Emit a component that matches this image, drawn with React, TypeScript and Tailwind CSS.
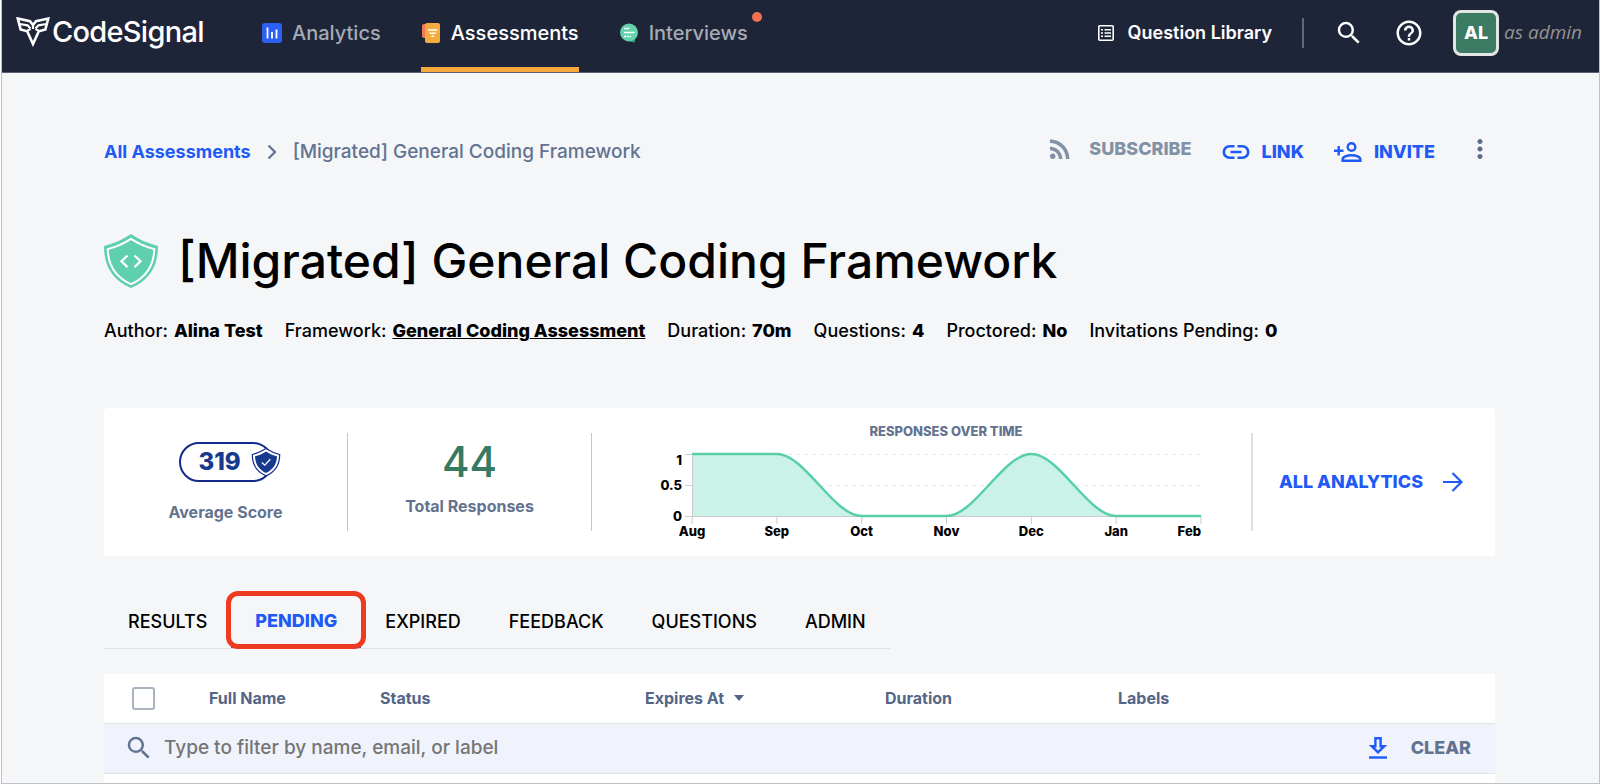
import { useState } from 'react';
import { MdHelpOutline, MdMoreVert, MdRssFeed, MdSearch } from 'react-icons/md';

const months = ['Aug', 'Sep', 'Oct', 'Nov', 'Dec', 'Jan', 'Feb'];
const responses = [1, 1, 0, 0, 1, 0, 0];

const tabs = ['Results', 'Pending', 'Expired', 'Feedback', 'Questions', 'Admin'];

const details = [
  { label: 'Author', value: 'Alina Test' },
  { label: 'Framework', value: 'General Coding Assessment', href: '#framework' },
  { label: 'Duration', value: '70m' },
  { label: 'Questions', value: '4' },
  { label: 'Proctored', value: 'No' },
  { label: 'Invitations Pending', value: '0' },
];

function LogoMark() {
  return (
    <svg viewBox="0 0 34 30" className="h-[30px] w-[34px] shrink-0" fill="none" stroke="#fff" strokeWidth="2.6">
      <path d="M1.800 1.600 L14 4.200 L17 8 L20 4.200 L32.200 1.600 L29.400 12.400 L22.800 14.300 L17 27 L11.200 14.300 L4.600 12.400 Z" />
      <path
        d="M3.500 7 L11.500 8.300 L14.500 11.500 M30.500 7 L22.500 8.300 L19.500 11.500 M17 8v4M11.400 13.500l3.200-1.500M22.600 13.500l-3.200-1.500"
        strokeWidth="2.200"
      />
    </svg>
  );
}

function AnalyticsIcon() {
  return (
    <svg viewBox="0 0 20 20" className="size-5">
      <rect width="20" height="20" rx="3" fill="#2d5ff5" />
      <path d="M5.500 4.500v11M10 9v6.500M14.500 6.500v9" stroke="#fff" strokeWidth="1.800" />
    </svg>
  );
}

function AssessmentsIcon() {
  return (
    <svg viewBox="0 0 20 20" className="size-5">
      <rect x="1" y="1" width="12" height="14" rx="2" fill="#f27a55" />
      <rect x="4" y="0" width="15" height="20" rx="2" fill="#f5ab3d" />
      <path d="M7 7h9.500M8.500 10.200h6.500M10.500 13.200h2.500" stroke="#fff" strokeWidth="1.600" />
    </svg>
  );
}

function InterviewsIcon() {
  return (
    <svg viewBox="0 0 20 20" className="size-5">
      <path d="M10 12h6v7.500l-5-1z" fill="#2e9e86" />
      <circle cx="10" cy="9.500" r="9" fill="#65d2ae" />
      <path d="M5 5.500h5.500M5 9.500h10.500" stroke="#fff" strokeWidth="1.600" />
      <path d="M5 13.500h7" stroke="#fff" strokeWidth="1.600" strokeDasharray="2 0.700" />
    </svg>
  );
}

function LibraryIcon() {
  return (
    <svg viewBox="0 0 16 16" className="size-4" fill="none" stroke="#fff">
      <rect x="0.8" y="0.8" width="14.4" height="14.4" rx="1" strokeWidth="1.6" />
      <path d="M3 4.700h2M3 8h2M3 11.300h2M6.500 4.700h6.500M6.500 8h6.500M6.500 11.300h6.500" strokeWidth="1.500" />
    </svg>
  );
}

function LinkIcon() {
  return (
    <svg viewBox="0 0 28 16" className="h-4 w-7" fill="none" stroke="currentColor" strokeWidth="2.6">
      <path d="M12.500 2.300H7.500a5.700 5.700 0 0 0 0 11.400h5M15.500 2.300h5a5.700 5.700 0 0 1 0 11.400h-5M8.500 8h11" />
    </svg>
  );
}

function InviteIcon() {
  return (
    <svg viewBox="0 0 28 20" className="h-5 w-7" fill="none" stroke="currentColor" strokeWidth="2.400">
      <path d="M0 8.700h9.500M4.700 4v9.500" />
      <circle cx="17.500" cy="5" r="3.800" />
      <path d="M8.600 18.700v-1.500c0-2.400 4.400-4 8.900-4s8.900 1.600 8.900 4v1.500z" />
    </svg>
  );
}

function CodeShield() {
  return (
    <svg viewBox="0 0 54 54" className="size-[54px] shrink-0">
      <path d="M27 0C35 5.500 44 9.500 54 12c0 20-8 34-27 42C8 46 0 32 0 12 10 9.500 19 5.500 27 0z" fill="#5fd0ad" />
      <path
        d="M27 4.800c7.200 4.700 14.800 8.100 23.300 10.300-.5 16.200-7.500 28-23.300 35.100C11.200 43.100 4.200 31.300 3.700 15.100 12.200 12.900 19.800 9.500 27 4.800z"
        fill="none"
        stroke="#fff"
        strokeWidth="2"
      />
      <path d="M23.500 21.500l-6 5.800 6 5.800M30.500 21.500l6 5.800-6 5.800" fill="none" stroke="#fff" strokeWidth="2.200" />
    </svg>
  );
}

function ScoreShield() {
  return (
    <svg viewBox="0 0 30 30" className="absolute top-[3px] -right-[10px] size-[30px]">
      <path
        d="M15 1.500c4.500 3 8.500 4.800 13.700 6C28.700 18 24 25 15 28.800 6 25 1.300 18 1.300 7.500 6.500 6.300 10.500 4.500 15 1.500z"
        fill="#fff"
        stroke="#14298c"
        strokeWidth="1.200"
      />
      <path d="M15 4.500c3.500 2.300 7 3.800 11 4.800-.3 8-4 13.500-11 16.700C8 22.800 4.300 17.300 4 9.300c4-1 7.500-2.500 11-4.800z" fill="#173a8f" />
      <path d="M10.800 15.500l3 2.700 5.500-6" fill="none" stroke="#fff" strokeWidth="1.300" />
    </svg>
  );
}

function DownloadIcon() {
  return (
    <svg viewBox="0 0 18 22" className="h-[22px] w-[18px]" fill="none" stroke="currentColor" strokeWidth="2.400">
      <path d="M6.400 1.200h5.200v8h3.600L9 15.300 2.800 9.200h3.600z" />
      <path d="M0 20.500h18" />
    </svg>
  );
}

function ResponsesChart() {
  const left = 44;
  const right = 553;
  const top = 13;
  const bottom = 75;
  const step = (right - left) / (months.length - 1);
  const y = (value: number) => bottom - value * (bottom - top);

  // flat tangents at every point, so each segment eases in and out
  const line = responses
    .map((value, i) => {
      const x = left + i * step;
      if (i === 0) return `M${x} ${y(value)}`;
      const prev = responses[i - 1];
      return `C${x - (step * 2) / 3} ${y(prev)} ${x - step / 3} ${y(value)} ${x} ${y(value)}`;
    })
    .join(' ');

  return (
    <svg viewBox="0 0 560 100" className="h-[100px] w-[560px]" role="img" aria-label="Responses over time">
      <path d={`M${left} ${top + 0.5}H${right}M${left} 44.500H${right}`} stroke="#e8e8e8" strokeDasharray="4 4" />
      <path d={`${line} V${bottom} H${left} Z`} fill="#cbf2e8" />
      <path d={`M${left + 0.5} ${top}V${bottom}M${left} ${bottom + 0.5}H${right}`} stroke="#ccc" />
      <path d={`M37 ${top + 0.5}h7M37 44.500h7M37 ${bottom + 0.5}h7`} stroke="#ccc" />
      {months.map((month, i) => (
        <path key={month} d={`M${left + i * step} ${bottom}v8`} stroke="#ccc" />
      ))}
      <path d={line} fill="none" stroke="#58ceab" strokeWidth="2.5" />
      <g fontSize="13" fontWeight="800" textAnchor="end">
        <text x="34" y="24">1</text>
        <text x="34" y="49">0.5</text>
        <text x="34" y="80">0</text>
      </g>
      <g fontSize="13" fontWeight="800">
        {months.map((month, i) => (
          <text key={month} x={left + i * step} y="95" textAnchor={i === months.length - 1 ? 'end' : 'middle'}>
            {month}
          </text>
        ))}
      </g>
    </svg>
  );
}

function Header() {
  return (
    <header className="flex h-[73px] items-center justify-between border-b border-[#59617a] bg-[#1f2538] pr-[17px] pl-[14px] text-white">
      <div className="flex h-full items-center">
        <a href="#home" className="flex w-[246px] items-center gap-[2px] pb-2">
          <LogoMark />
          <span className="text-[29px] leading-8 font-medium tracking-tight">CodeSignal</span>
        </a>
        <nav className="flex h-full gap-10 pb-[7px] text-xl font-medium text-[#a5abb5]">
          <a href="#analytics" className="flex items-center gap-[10px]">
            <AnalyticsIcon />
            Analytics
          </a>
          <a href="#assessments" className="relative flex items-center gap-[10px] text-white">
            <AssessmentsIcon />
            Assessments
            <span className="absolute inset-x-0 -bottom-[7px] h-[5px] bg-[#f5a93b]" />
          </a>
          <a href="#interviews" className="relative flex items-center gap-[10px]">
            <InterviewsIcon />
            Interviews
            <span className="absolute top-3 -right-[14px] size-[10px] rounded-full bg-[#f2724f]" />
          </a>
        </nav>
      </div>
      <div className="flex items-center pb-[7px]">
        <a href="#library" className="flex items-center gap-[14px] text-lg font-semibold">
          <LibraryIcon />
          Question Library
        </a>
        <span className="ml-[30px] h-[30px] w-[2px] bg-[#5a6a85]" />
        <button aria-label="Search" className="ml-[30px]">
          <MdSearch className="size-[30px]" />
        </button>
        <button aria-label="Help" className="ml-[30px]">
          <MdHelpOutline className="size-[30px]" />
        </button>
        <button className="ml-[29px] size-[46px] rounded-lg border-[3px] border-[#e4e6e6] bg-[#3b7a63] text-lg font-extrabold">AL</button>
        <span className="ml-[5px] font-['Open_Sans'] text-[19px] text-[#939393] italic">as admin</span>
      </div>
    </header>
  );
}

export default function App() {
  const [activeTab, setActiveTab] = useState('Pending');
  const [filter, setFilter] = useState('');

  return (
    <div className="ml-px flex min-h-screen flex-col border-r border-b border-l border-[#bfc1c4] bg-[#f4f6f8] font-['Inter',sans-serif] text-black">
      <Header />
      <main className="flex grow flex-col pr-[104px] pl-[102px]">
        <div className="mt-[62px] flex h-8 items-center justify-between">
          <nav aria-label="Breadcrumb" className="flex items-center pt-[2px] text-lg">
            <a href="#all" className="font-bold text-[#1f5af6]">All Assessments</a>
            <svg viewBox="0 0 10 16" className="mx-4 h-4 w-[10px]" fill="none" stroke="#5f7290" strokeWidth="2.200">
              <path d="M1.500 1.500L8 8l-6.500 6.500" />
            </svg>
            <span className="text-[19px] font-medium text-[#627392]">[Migrated] General Coding Framework</span>
          </nav>
          <div className="flex items-center pt-[2px] text-lg font-extrabold text-[#1f5af6]">
            <button className="flex items-center gap-[14px] pb-[6px] text-[#8391a4]">
              <MdRssFeed className="size-[30px]" />
              SUBSCRIBE
            </button>
            <button className="ml-[30px] flex items-center gap-3">
              <LinkIcon />
              LINK
            </button>
            <button className="ml-[30px] flex items-center gap-3">
              <InviteIcon />
              INVITE
            </button>
            <button aria-label="More actions" className="ml-[30px] pb-[6px] text-[#5a6a80]">
              <MdMoreVert className="size-[30px]" />
            </button>
          </div>
        </div>

        <div className="mt-[66px] flex items-center gap-5">
          <CodeShield />
          <h1 className="text-[48px] leading-[56px] font-medium">[Migrated] General Coding Framework</h1>
        </div>

        <dl className="mt-[30px] flex h-6 items-center gap-[22px] text-lg">
          {details.map((item) => (
            <div key={item.label} className="flex gap-[6px]">
              <dt className="font-medium">{item.label}:</dt>
              <dd className="font-extrabold">
                {item.href ? <a href={item.href} className="underline">{item.value}</a> : item.value}
              </dd>
            </div>
          ))}
        </dl>

        <section className="mt-[65px] flex h-[148px] items-center rounded-sm bg-white">
          <div className="flex h-[98px] w-[244px] shrink-0 flex-col items-center border-r border-[#c4c6ca] pt-[9px]">
            <div className="relative flex h-10 w-[94px] items-center rounded-full border-2 border-[#14298c] pl-[18px] text-2xl font-extrabold text-[#173a8f]">
              319
              <ScoreShield />
            </div>
            <p className="mt-[18px] text-base leading-6 font-bold text-[#63738f]">Average Score</p>
          </div>
          <div className="flex h-[98px] w-[244px] shrink-0 flex-col items-center border-r border-[#c4c6ca] pt-[9px]">
            <p className="text-[42px] leading-10 font-medium text-[#377a62]">44</p>
            <p className="mt-3 text-base leading-6 font-bold text-[#63738f]">Total Responses</p>
          </div>
          <div className="flex h-[148px] grow flex-col items-center justify-center">
            <div className="ml-3 w-[560px]">
              <h2 className="pr-[7px] pl-11 text-center text-[13px] leading-4 font-extrabold text-[#63738f]">RESPONSES OVER TIME</h2>
              <div className="pt-[2px]">
                <ResponsesChart />
              </div>
            </div>
          </div>
          <div className="flex h-[98px] w-[244px] shrink-0 items-center justify-center border-l-2 border-[#dedfe1] pr-[6px]">
            <a href="#all-analytics" className="flex items-center gap-5 text-lg font-extrabold text-[#1f5af6]">
              ALL ANALYTICS
              <svg viewBox="0 0 20 20" className="size-5" fill="none" stroke="currentColor" strokeWidth="2.200">
                <path d="M0 10h18M9.500 1l9 9-9 9" />
              </svg>
            </a>
          </div>
        </section>

        <div role="tablist" className="mt-9 flex h-[57px] self-start border-b border-[#dfe1e4]">
          {tabs.map((tab) => (
            <button
              key={tab}
              role="tab"
              aria-selected={tab === activeTab}
              onClick={() => setActiveTab(tab)}
              className={`relative px-6 pt-1 text-lg uppercase ${
                tab === activeTab ? 'border-b-2 border-[#1f5af6] font-extrabold text-[#1f5af6]' : 'font-medium'
              }`}
            >
              {tab}
              {tab === 'Pending' && (
                <span className="absolute -inset-x-[5px] -top-px -bottom-[3px] rounded-xl border-[5px] border-[#ee3a20]" />
              )}
            </button>
          ))}
        </div>

        <div className="mt-[25px] grow bg-white">
          <table className="w-full table-fixed text-left">
            <thead>
              <tr className="h-[49px] border-b border-[#e2e4e8] text-base text-[#546687]">
                <th className="w-[105px] pl-7">
                  <input
                    type="checkbox"
                    aria-label="Select all"
                    className="block size-[23px] appearance-none rounded-[3px] border-2 border-[#a9b2c0] bg-white"
                  />
                </th>
                <th className="w-[171px]">Full Name</th>
                <th className="w-[265px]">Status</th>
                <th className="w-[240px]">
                  <button className="flex items-center gap-[10px]">
                    Expires At
                    <svg viewBox="0 0 10 6" className="h-[6px] w-[10px]" fill="currentColor">
                      <path d="M0 0h10L5 6z" />
                    </svg>
                  </button>
                </th>
                <th className="w-[233px]">Duration</th>
                <th>Labels</th>
              </tr>
            </thead>
            <tbody>
              <tr className="h-[50px] border-b border-[#e2e4e8] bg-[#f0f3fc]">
                <td colSpan={6}>
                  <div className="flex items-center pr-6 pl-5">
                    <MdSearch className="size-[30px] text-[#5f7290]" />
                    <input
                      type="text"
                      aria-label="Filter candidates"
                      value={filter}
                      onChange={(e) => setFilter(e.target.value)}
                      placeholder="Type to filter by name, email, or label"
                      className="ml-[10px] grow bg-transparent text-[19px] font-medium outline-none placeholder:text-[#757575]"
                    />
                    <button aria-label="Download" className="text-[#1f5af6]">
                      <DownloadIcon />
                    </button>
                    <button onClick={() => setFilter('')} className="ml-6 text-lg font-extrabold text-[#63738f]">
                      CLEAR
                    </button>
                  </div>
                </td>
              </tr>
            </tbody>
          </table>
        </div>
      </main>
    </div>
  );
}
